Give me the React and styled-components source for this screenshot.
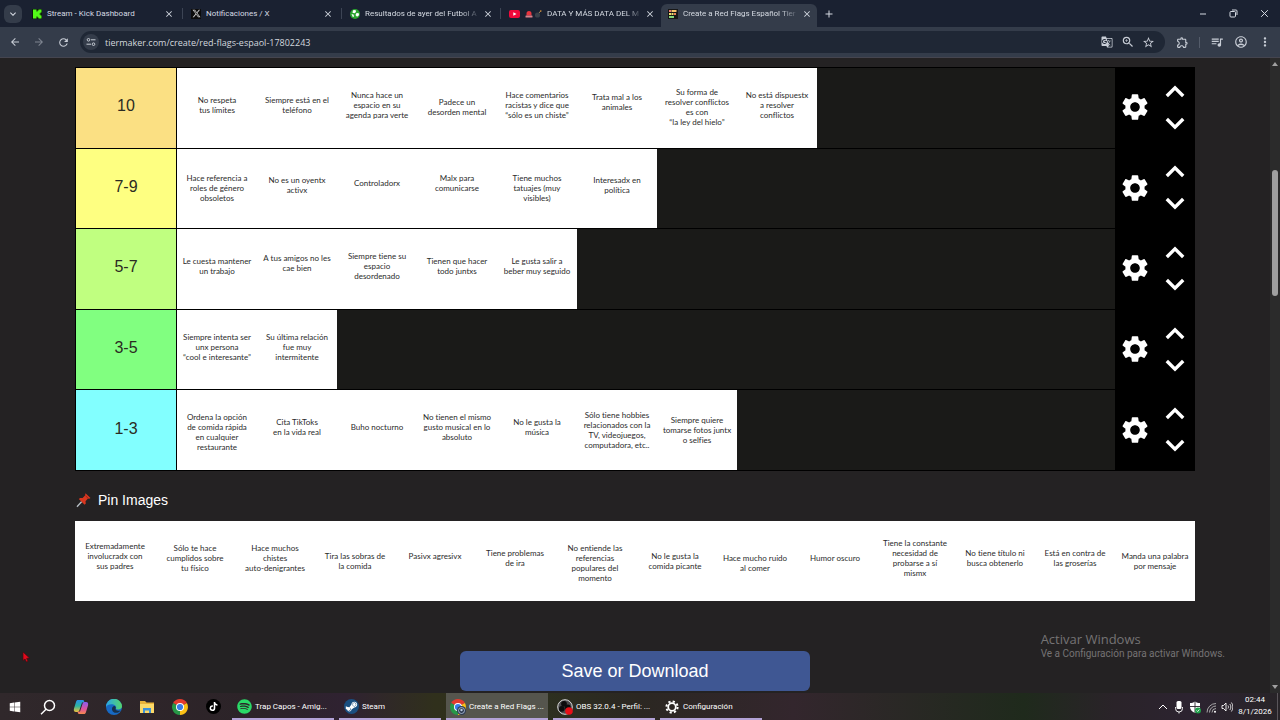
import React, { useState } from 'react';
import styled, { createGlobalStyle } from 'styled-components';
import {
    MdAdd, MdArrowBack, MdArrowForward, MdClose, MdGTranslate, MdKeyboardArrowDown,
    MdMoreVert, MdOutlineAccountCircle, MdOutlineExtension, MdQueueMusic, MdRefresh,
    MdSettings, MdStarBorder, MdZoomIn
} from 'react-icons/md';
import { FaXTwitter, FaTiktok, FaSpotify, FaSteamSymbol, FaWindows } from 'react-icons/fa6';

const tiers = [
    { name: '10', color: '#fbe083', cards: [
        ['No respeta\ntus límites', 'mid'],
        ['Siempre está en el\nteléfono', 'mid'],
        ['Nunca hace un\nespacio en su\nagenda para verte', 'mid'],
        ['Padece un\ndesorden mental', 'base'],
        ['Hace comentarios\nracistas y dice que\n“sólo es un chiste”', 'mid'],
        ['Trata mal a los\nanimales', 'high'],
        ['Su forma de\nresolver conflictos\nes con\n“la ley del hielo”', 'base'],
        ['No está dispuestx\na resolver\nconflictos', 'mid'],
    ]},
    { name: '7-9', color: '#feff81', cards: [
        ['Hace referencia a\nroles de género\nobsoletos', 'base'],
        ['No es un oyentx\nactivx', 'mid'],
        ['Controladorx', 'high'],
        ['Malx para\ncomunicarse', 'high'],
        ['Tiene muchos\ntatuajes (muy\nvisibles)', 'base'],
        ['Interesadx en\npolítica', 'mid'],
    ]},
    { name: '5-7', color: '#c0ff80', cards: [
        ['Le cuesta mantener\nun trabajo', 'mid'],
        ['A tus amigos no les\ncae bien', 'high'],
        ['Siempre tiene su\nespacio\ndesordenado', 'mid'],
        ['Tienen que hacer\ntodo juntxs', 'mid'],
        ['Le gusta salir a\nbeber muy seguido', 'mid'],
    ]},
    { name: '3-5', color: '#81ff80', cards: [
        ['Siempre intenta ser\nunx persona\n“cool e interesante”', 'mid'],
        ['Su última relación\nfue muy\nintermitente', 'mid'],
    ]},
    { name: '1-3', color: '#82ffff', cards: [
        ['Ordena la opción\nde comida rápida\nen cualquier\nrestaurante', 'low'],
        ['Cita TikToks\nen la vida real', 'mid'],
        ['Buho nocturno', 'mid'],
        ['No tienen el mismo\ngusto musical en lo\nabsoluto', 'mid'],
        ['No le gusta la\nmúsica', 'mid'],
        ['Sólo tiene hobbies\nrelacionados con la\nTV, videojuegos,\ncomputadora, etc..', 'base'],
        ['Siempre quiere\ntomarse fotos juntx\no selfies', 'base'],
    ]},
];

const pinned = [
    ['Extremadamente\ninvolucradx con\nsus padres', 'high'],
    ['Sólo te hace\ncumplidos sobre\ntu físico', 'mid'],
    ['Hace muchos\nchistes\nauto-denigrantes', 'mid'],
    ['Tira las sobras de\nla comida', 'base'],
    ['Pasivx agresivx', 'high'],
    ['Tiene problemas\nde ira', 'mid'],
    ['No entiende las\nreferencias\npopulares del\nmomento', 'low'],
    ['No le gusta la\ncomida picante', 'base'],
    ['Hace mucho ruido\nal comer', 'low'],
    ['Humor oscuro', 'mid'],
    ['Tiene la constante\nnecesidad de\nprobarse a sí\nmismx', 'mid'],
    ['No tiene título ni\nbusca obtenerlo', 'mid'],
    ['Está en contra de\nlas groserías', 'mid'],
    ['Manda una palabra\npor mensaje', 'base'],
];

const tabs = [
    { title: 'Stream - Kick Dashboard', icon: <KickIcon /> },
    { title: 'Notificaciones / X', icon: <XIcon /> },
    { title: 'Resultados de ayer del Futbol A', icon: <BallIcon />, fade: true },
    { title: 'DATA Y MÁS DATA DEL M', icon: <YoutubeIcon />, emojis: true, fade: true },
    { title: 'Create a Red Flags Español Tier', icon: <TierIcon />, active: true, fade: true },
];

const windows = [
    { title: 'Trap Capos - Amig...', icon: <FaSpotify size={15} color='#2bd967' /> },
    { title: 'Steam', icon: <SteamIcon /> },
    { title: 'Create a Red Flags ...', icon: <ChromeIcon badge />, active: true },
    { title: 'OBS 32.0.4 - Perfil: ...', icon: <ObsIcon /> },
    { title: 'Configuración', icon: <CogIcon /> },
];

function App() {
    const [url, setUrl] = useState('tiermaker.com/create/red-flags-espaol-17802243');

    return (
        <Desktop>
            <GlobalStyle />
            <TabStrip>
                <TabSearch aria-label='Buscar pestañas'><MdKeyboardArrowDown size={12} /></TabSearch>
                <Tabs>
                    {tabs.map((tab) => (
                        <Tab key={tab.title} $active={tab.active}>
                            {tab.icon}
                            {tab.emojis && <EmojiPair />}
                            <TabTitle $fade={tab.fade}>{tab.title}</TabTitle>
                            <IconButton $size={12} aria-label='Cerrar pestaña'><MdClose size={10} /></IconButton>
                        </Tab>
                    ))}
                </Tabs>
                <IconButton $size={18} aria-label='Nueva pestaña'><MdAdd size={12} /></IconButton>
                <WindowButtons>
                    <IconButton $size={31} aria-label='Minimizar'>
                        <svg width='8' height='8' viewBox='0 0 8 8'><path d='M1 4h6' stroke='currentColor' /></svg>
                    </IconButton>
                    <IconButton $size={31} aria-label='Restaurar'>
                        <svg width='9' height='9' viewBox='0 0 9 9' fill='none' stroke='currentColor'>
                            <rect x='1' y='2.5' width='5.5' height='5.5' rx='1' />
                            <path d='M3 1h4a1 1 0 0 1 1 1v4' />
                        </svg>
                    </IconButton>
                    <IconButton $size={31} aria-label='Cerrar'>
                        <svg width='9' height='9' viewBox='0 0 9 9'><path d='M1.200 1.200l6.600 6.600M7.800 1.200l-6.600 6.600' stroke='currentColor' /></svg>
                    </IconButton>
                </WindowButtons>
            </TabStrip>

            <Toolbar>
                <IconButton $size={24} aria-label='Atrás'><MdArrowBack size={12} /></IconButton>
                <IconButton $size={24} $dim aria-label='Adelante'><MdArrowForward size={12} /></IconButton>
                <IconButton $size={24} aria-label='Recargar'><MdRefresh size={13} /></IconButton>
                <AddressBar>
                    <SiteInfo aria-label='Información del sitio'>
                        <svg width='10' height='10' viewBox='0 0 10 10' fill='none' stroke='currentColor'>
                            <circle cx='2.500' cy='2.800' r='1.300' /><path d='M5 2.800h4.500M.5 7.200h4.500' />
                            <circle cx='7.500' cy='7.200' r='1.300' />
                        </svg>
                    </SiteInfo>
                    <UrlInput aria-label='Dirección' value={url} onChange={(e) => setUrl(e.target.value)} />
                    <IconButton $size={21} aria-label='Traducir'><MdGTranslate size={12} /></IconButton>
                    <IconButton $size={21} aria-label='Zoom'><MdZoomIn size={14} /></IconButton>
                    <IconButton $size={21} aria-label='Favoritos'><MdStarBorder size={13} /></IconButton>
                </AddressBar>
                <IconButton $size={24} aria-label='Extensiones'><MdOutlineExtension size={13} /></IconButton>
                <Divider />
                <IconButton $size={24} aria-label='Multimedia'><MdQueueMusic size={14} /></IconButton>
                <IconButton $size={24} aria-label='Perfil'><MdOutlineAccountCircle size={14} /></IconButton>
                <IconButton $size={24} aria-label='Menú'><MdMoreVert size={14} /></IconButton>
            </Toolbar>

            <Viewport>
                <Main>
                    <Board>
                        {tiers.map((tier) => (
                            <Tier key={tier.name}>
                                <TierName $color={tier.color}>{tier.name}</TierName>
                                <CardList>
                                    {tier.cards.map(([text, place]) => <Card key={text} $place={place}>{text}</Card>)}
                                </CardList>
                                <TierControls>
                                    <ControlButton aria-label='Settings'><MdSettings size={32} /></ControlButton>
                                    <MoveButtons>
                                        <ControlButton aria-label='Move up'><Chevron up /></ControlButton>
                                        <ControlButton aria-label='Move down'><Chevron /></ControlButton>
                                    </MoveButtons>
                                </TierControls>
                            </Tier>
                        ))}
                    </Board>
                    <PinHeading><PinIcon />Pin Images</PinHeading>
                    <PinTray>
                        {pinned.map(([text, place]) => <Card key={text} $place={place}>{text}</Card>)}
                    </PinTray>
                    <SaveButton>Save or Download</SaveButton>
                </Main>
                <Scrollbar>
                    <ScrollArrow />
                    <ScrollThumb />
                    <ScrollArrow $down />
                </Scrollbar>
                <Watermark>
                    <h2>Activar Windows</h2>
                    <p>Ve a Configuración para activar Windows.</p>
                </Watermark>
                <Pointer width='8' height='12' viewBox='0 0 8 12'>
                    <path d='M1 1v8.500l2-1.500 1.500 3 1.500-.8-1.300-2.800L7.500 7z' fill='#e00a1c' stroke='#4a0a10' strokeWidth='.7' />
                </Pointer>
            </Viewport>

            <Taskbar>
                <Launchers>
                    <TaskIcon aria-label='Inicio'><FaWindows size={12} /></TaskIcon>
                    <TaskIcon aria-label='Buscar'>
                        <svg width='16' height='16' viewBox='0 0 16 16' fill='none' stroke='#fff' strokeWidth='1.500'>
                            <circle cx='9.500' cy='6.500' r='5' /><path d='M6 10.200L1 15.200' />
                        </svg>
                    </TaskIcon>
                    <TaskIcon aria-label='Copilot'><CopilotIcon /></TaskIcon>
                    <TaskIcon aria-label='Edge'><EdgeIcon /></TaskIcon>
                    <TaskIcon aria-label='Explorador de archivos'><FolderIcon /></TaskIcon>
                    <TaskIcon aria-label='Chrome'><ChromeIcon /></TaskIcon>
                    <TaskIcon aria-label='TikTok'><Disc><FaTiktok size={9} /></Disc></TaskIcon>
                </Launchers>
                <OpenWindows>
                    {windows.map((win) => (
                        <WindowButton key={win.title} $active={win.active}>
                            <WindowIcon>{win.icon}</WindowIcon>
                            {win.title}
                        </WindowButton>
                    ))}
                </OpenWindows>
                <Tray>
                    <TrayIcons />
                    <Clock><span>02:44</span><span>8/1/2026</span></Clock>
                </Tray>
            </Taskbar>
        </Desktop>
    )
}

export default App

function Chevron({ up }) {
    return (
        <svg width='20' height='14' viewBox='0 0 20 14' fill='none' stroke='#fff' strokeWidth='3.400'>
            <path d={up ? 'M1.800 11l8.200-8.200 8.200 8.200' : 'M1.800 3l8.200 8.200 8.200-8.200'} />
        </svg>
    )
}

function KickIcon() {
    return (
        <svg width='10' height='10' viewBox='0 0 10 10'>
            <rect width='10' height='10' fill='#0b1a0b' />
            <path d='M1 .5h3.500v2h1v-1h1v-1h3v3h-1v1h-1v1h1v1h1v3h-3v-1h-1v-1h-1v2H1z' fill='#53fc18' />
        </svg>
    )
}

function XIcon() {
    return <IconTile><FaXTwitter size={9} /></IconTile>
}

function BallIcon() {
    return (
        <svg width='10' height='10' viewBox='0 0 10 10'>
            <circle cx='5' cy='5' r='5' fill='#2aa52f' />
            <path d='M3 1.200l2.500-.2.500 2L4.500 4.200l-2 -.5zM6.500 4l2.300.2.200 2-2 1.500L5.500 6zM1.500 5l2 .5.600 2L2.800 8z' fill='#fff' />
        </svg>
    )
}

function YoutubeIcon() {
    return (
        <svg width='11' height='10' viewBox='0 0 11 10'>
            <rect y='1' width='11' height='8' rx='2' fill='#f2083a' />
            <path d='M4.300 3.200v3.600L7.500 5z' fill='#fff' />
        </svg>
    )
}

function EmojiPair() {
    return (
        <svg width='17' height='10' viewBox='0 0 17 10'>
            <path d='M1.500 6.500V4.500a2.500 2.500 0 0 1 5 0v2z' fill='#e8343e' />
            <rect x='.5' y='6.500' width='7' height='2' rx='.5' fill='#d9808a' />
            <circle cx='12.500' cy='6' r='2.600' fill='#39414a' />
            <path d='M14 4l1.500-1.800' stroke='#a08a5a' />
            <circle cx='15.800' cy='2' r='.8' fill='#e59a3c' />
        </svg>
    )
}

function TierIcon() {
    return (
        <svg width='10' height='10' viewBox='0 0 10 10'>
            <rect width='10' height='10' fill='#171717' />
            <path d='M1 1h2v2H1z' fill='#f07a72' />
            <path d='M3.500 1h5v2h-5z' fill='#f5c46c' />
            <path d='M1 4h2v2H1zM3.500 4h2v2h-2z' fill='#f3e06d' />
            <path d='M6 4h2v2H6z' fill='#e88258' />
            <path d='M1 7h5v2H1z' fill='#86d67a' />
        </svg>
    )
}

function PinIcon() {
    return (
        <svg width='16' height='16' viewBox='0 0 16 16'>
            <path d='M5.800 9.500L1 14.800' stroke='#b8c0c6' strokeWidth='1.300' />
            <path d='M9.500 1.200l5 4.800-1.300.8-1.200-.2-2.500 2.600.3 2.400-1.200 1.200L2.800 7l1.300-1.100 2.500.2L9 3.500z' fill='#d8371f' />
            <path d='M9.500 3.800l2.500 2.400' stroke='#9c2418' />
        </svg>
    )
}

function CopilotIcon() {
    return (
        <svg width='16' height='16' viewBox='0 0 16 16'>
            <defs>
                <linearGradient id='copA' x1='0' y1='0' x2='0' y2='1'><stop stopColor='#2a8fe8' /><stop offset='.5' stopColor='#2cb5a0' /><stop offset='1' stopColor='#f2c13a' /></linearGradient>
                <linearGradient id='copB' x1='0' y1='0' x2='0' y2='1'><stop stopColor='#8a5cf0' /><stop offset='.6' stopColor='#e0559a' /><stop offset='1' stopColor='#f58a4c' /></linearGradient>
            </defs>
            <path d='M5 1h5c1 0 1 1 1.500 2.500H9L6.500 11c-.4 1.500-1 2-2.500 2H3c-2 0-2.500-1.500-2-3.500L3 3c.4-1.500 1-2 2-2z' fill='url(#copA)' />
            <path d='M11 15H6c-1 0-1-1-1.500-2.500H7L9.500 5c.4-1.500 1-2 2.500-2h1c2 0 2.500 1.500 2 3.500L13 13c-.4 1.500-1 2-2 2z' fill='url(#copB)' />
        </svg>
    )
}

function EdgeIcon() {
    return (
        <svg width='16' height='16' viewBox='0 0 16 16'>
            <defs>
                <linearGradient id='edge' x1='0' y1='0' x2='1' y2='0'><stop stopColor='#2aa5e8' /><stop offset='1' stopColor='#56d66a' /></linearGradient>
            </defs>
            <circle cx='8' cy='8' r='8' fill='#1769c4' />
            <path d='M0 8a8 8 0 0 1 16-.5c0 3-4.500 3.800-6.200 2.300C11 8.500 9.500 5.500 6.500 5.300 3 5 .8 6.500 0 8z' fill='url(#edge)' />
            <path d='M9.600 9.500c-.6 1.500 1.400 3 4.900 2-2 3.500-8 3-8.500-1C5.800 8.500 7 7 8.600 7c1 .5 1.400 1.600 1 2.500z' fill='#17304a' />
        </svg>
    )
}

function FolderIcon() {
    return (
        <svg width='16' height='14' viewBox='0 0 16 14'>
            <path d='M1 1h5l1.500 1.500H15V13H1z' fill='#e8b33a' />
            <path d='M1 4h14v9H1z' fill='#fbd968' />
            <path d='M4 8h8v5h-2v-2.500H6V13H4z' fill='#3d92d8' />
        </svg>
    )
}

function ChromeIcon({ badge }) {
    return (
        <svg width='16' height='16' viewBox='0 0 16 16'>
            <path d='M8 8L1.100 4a8 8 0 0 1 13.800 0z' fill='#e33b2e' />
            <path d='M8 8L14.900 4A8 8 0 0 1 8 16z' fill='#fbc116' />
            <path d='M8 8v8A8 8 0 0 1 1.100 4z' fill='#279847' />
            <circle cx='8' cy='8' r='4' fill='#fff' />
            <circle cx='8' cy='8' r='3.100' fill='#3b7de8' />
            {badge && <g><circle cx='11.500' cy='11.500' r='4.500' fill='#2c3a52' /><circle cx='11.500' cy='11.500' r='3' fill='none' stroke='#b9c8e0' strokeWidth='.8' /><circle cx='11.500' cy='11' r='1.200' fill='#b9c8e0' /></g>}
        </svg>
    )
}

function SteamIcon() {
    return <Disc $color='#1a4f80'><FaSteamSymbol size={13} /></Disc>
}

function ObsIcon() {
    return (
        <svg width='16' height='16' viewBox='0 0 16 16'>
            <circle cx='8' cy='8' r='7.300' fill='#4a4a4c' stroke='#d8d8d8' strokeWidth='1' />
            <circle cx='7' cy='4.800' r='2.900' fill='#0c0c0d' />
            <circle cx='4.800' cy='9.800' r='2.900' fill='#0c0c0d' />
            <circle cx='10.800' cy='8.300' r='2.900' fill='#0c0c0d' />
            <circle cx='12' cy='12' r='3.800' fill='#e80f18' />
        </svg>
    )
}

function CogIcon() {
    return (
        <svg width='14' height='14' viewBox='0 0 14 14' fill='none' stroke='#fff'>
            <circle cx='7' cy='7' r='3.800' strokeWidth='1.800' />
            <circle cx='7' cy='7' r='5.600' strokeWidth='2' strokeDasharray='2.200 2.198' />
        </svg>
    )
}

function TrayIcons() {
    return (
        <svg width='76' height='14' viewBox='0 0 76 14' fill='none' stroke='#fff'>
            <path d='M2 9l4-4 4 4' />
            <rect x='19.500' y='1' width='5' height='8' rx='1.500' fill='#fff' stroke='none' />
            <path d='M18.500 7v1.500a3.500 3.500 0 0 0 7 0V7M22 12v1.500' strokeWidth='.9' />
            <path d='M38 1.500c1.800 1.200 3 1.500 5 1.500v4c0 3-2.500 5-5 6-2.500-1-5-3-5-6V3c2 0 3.200-.3 5-1.500z' fill='#fff' stroke='none' />
            <path d='M38 1.500V13M33 6.500h10' stroke='#2b242c' strokeWidth='.9' />
            <circle cx='41' cy='10.500' r='3' fill='#1fa04a' stroke='none' />
            <path d='M39.600 10.500l1 1 1.800-2' strokeWidth='.8' />
            <path d='M50 12.500a9 9 0 0 1 9-9M52.500 12.500A6.500 6.500 0 0 1 59 6M55 12.500a4 4 0 0 1 4-4' stroke='#b5b5b5' strokeWidth='.9' />
            <circle cx='58' cy='11.800' r='1' fill='#fff' stroke='none' />
            <path d='M65 5.500h1.500L69 3v8l-2.500-2.500H65z' strokeWidth='.9' />
            <path d='M71 5.500c.6.800.6 2.200 0 3M72.800 4c1.400 1.600 1.400 4.400 0 6M74.400 2.500c2 2.600 2 6.400 0 9' strokeWidth='.8' />
        </svg>
    )
}

const GlobalStyle = createGlobalStyle`
    *{
        box-sizing:border-box;
    }

    body{
        margin:0;
        background:#242223;
        font-family:'Liberation Sans', Arial, sans-serif;
    }

    button{
        padding:0;
        border:none;
        background:transparent;
        color:inherit;
        font:inherit;
        cursor:pointer;
    }

    svg{
        display:block;
        flex-shrink:0;
    }
`

const Desktop = styled.div`
    height:100vh;
    display:flex;
    flex-direction:column;
    overflow:hidden;
`

const IconButton = styled.button`
    width:${props => props.$size}px;
    height:20px;
    flex-shrink:0;
    display:flex;
    align-items:center;
    justify-content:center;
    opacity:${props => props.$dim ? 0.5 : 1};
`

const TabStrip = styled.div`
    height:27px;
    flex-shrink:0;
    display:flex;
    align-items:center;
    padding-left:4px;
    background:#1a2131;
    color:#d5dae2;
    font-family:Roboto, 'Open Sans', sans-serif;
`

const TabSearch = styled.button`
    width:18px;
    height:18px;
    display:flex;
    align-items:center;
    justify-content:center;
    border-radius:6px;
    background:#343c4a;
`

const Tabs = styled.div`
    display:flex;
    align-self:stretch;
    gap:3px;
    padding:4px 3px 0;
`

const Tab = styled.div`
    width:156px;
    display:flex;
    align-items:center;
    gap:5px;
    position:relative;
    padding:0 6px 4px 7px;
    border-radius:6px 6px 0 0;
    background:${props => props.$active ? '#343c4a' : 'transparent'};

    &:nth-child(-n+3)::after{
        content:'';
        position:absolute;
        right:-2px;
        top:4px;
        width:1px;
        height:11px;
        background:#3c4454;
    }
`

const TabTitle = styled.span`
    flex:1;
    white-space:nowrap;
    font-size:8px;
    line-height:12px;
    mask-image:${props => props.$fade ? 'linear-gradient(to right, #000 86%, rgba(0,0,0,0.2))' : 'none'};
`

const IconTile = styled.span`
    width:10px;
    height:10px;
    display:flex;
    align-items:center;
    justify-content:center;
    background:#0c0c0c;
    color:#c9c9c9;
`

const WindowButtons = styled.div`
    display:flex;
    margin-left:auto;
`

const Toolbar = styled.div`
    height:31px;
    flex-shrink:0;
    display:flex;
    align-items:center;
    padding:0 3px;
    background:#343c4a;
    border-bottom:1px solid #45454f;
    color:#c8cdd6;
`

const AddressBar = styled.div`
    flex:1;
    height:22px;
    display:flex;
    align-items:center;
    margin:0 5px;
    padding:0 6px 0 3px;
    border-radius:11px;
    background:#1f2735;
`

const SiteInfo = styled.button`
    width:16px;
    height:16px;
    display:flex;
    align-items:center;
    justify-content:center;
    border-radius:50%;
    background:#343c4a;
`

const UrlInput = styled.input`
    flex:1;
    min-width:0;
    padding:0 6px;
    border:none;
    outline:none;
    background:transparent;
    color:#d3d7de;
    font-family:'Open Sans', 'Noto Sans', sans-serif;
    font-size:9px;
`

const Divider = styled.span`
    width:1px;
    height:11px;
    margin:0 5px;
    background:#545c6a;
`

const Viewport = styled.div`
    flex:1;
    min-height:0;
    display:flex;
    position:relative;
    background:#242223;
`

const Main = styled.main`
    flex:1;
    display:flex;
    flex-direction:column;
    padding:9px 75px 0;
    overflow:hidden;
`

const Board = styled.div`
    min-height:404px;
    flex-shrink:0;
    display:grid;
    grid-auto-rows:1fr;
    border:solid #000;
    border-width:1px 0 0 1px;
`

const Tier = styled.div`
    display:flex;
    background:#1a1a18;
    border-bottom:1px solid #000;
`

const TierName = styled.div`
    width:101px;
    flex-shrink:0;
    display:flex;
    align-items:center;
    justify-content:center;
    padding-bottom:3px;
    border-right:1px solid #000;
    background:${props => props.$color};
    color:#2b2b22;
    font-size:16px;
`

const CardList = styled.div`
    flex:1;
    display:flex;
`

const cardPadding = { high: '0 0 11px', mid: '0 0 6px', base: '0 0 1px', low: '4px 0 0' };

const Card = styled.div`
    width:80px;
    display:flex;
    align-items:center;
    justify-content:center;
    padding:${props => cardPadding[props.$place]};
    background:#fff;
    color:#2b2b2b;
    font-family:Lato, 'Open Sans', sans-serif;
    font-size:8px;
    font-variant-ligatures:none;
    line-height:10px;
    text-align:center;
    white-space:pre;
`

const TierControls = styled.div`
    width:80px;
    flex-shrink:0;
    display:grid;
    grid-template-columns:1fr 1fr;
    padding-bottom:1px;
    background:#000;
    color:#fff;
`

const ControlButton = styled.button`
    display:flex;
    align-items:center;
    justify-content:center;
`

const MoveButtons = styled.div`
    display:grid;
    grid-auto-rows:31px;
    align-content:center;
`

const PinHeading = styled.h1`
    display:flex;
    align-items:center;
    gap:6px;
    flex-shrink:0;
    margin:20px 0 12px;
    padding-left:1px;
    color:#fff;
    font-size:14px;
    line-height:18px;
    font-weight:400;
`

const PinTray = styled.div`
    min-height:80px;
    flex-shrink:0;
    display:flex;
    background:#fff;
`

const SaveButton = styled.button`
    width:350px;
    height:40px;
    flex-shrink:0;
    align-self:center;
    margin-top:50px;
    border-radius:6px;
    background:#3f5793;
    color:#fff;
    font-size:18px;
`

const Scrollbar = styled.div`
    width:10px;
    display:flex;
    flex-direction:column;
    align-items:center;
    padding:4px 0;
    background:#2b2b2b;
`

const ScrollArrow = styled.span`
    border:solid transparent;
    border-width:${props => props.$down ? '4px 3px 0' : '0 3px 4px'};
    border-top-color:${props => props.$down ? '#a0a0a0' : 'transparent'};
    border-bottom-color:${props => props.$down ? 'transparent' : '#a0a0a0'};
`

const ScrollThumb = styled.span`
    width:6px;
    height:126px;
    margin:104px 0 auto;
    border-radius:3px;
    background:#9f9f9f;
`

const Watermark = styled.div`
    position:absolute;
    right:55px;
    bottom:32px;
    color:#757374;

    h2{
        margin:0;
        font-family:'Open Sans', 'Noto Sans', sans-serif;
        font-size:13px;
        line-height:16px;
        font-weight:400;
    }

    p{
        margin:0;
        font-family:Roboto, 'Open Sans', sans-serif;
        font-size:10px;
        line-height:14px;
    }
`

const Pointer = styled.svg`
    position:absolute;
    left:22px;
    bottom:30px;
`

const Taskbar = styled.div`
    height:27px;
    flex-shrink:0;
    display:flex;
    background:linear-gradient(to right, #30282b 0, #2c2328 20%, #2f2231 27%, #30301c 34%, #2d301f 42%, #2b2722 50%, #33262d 62%, #1f2a1c 80%, #2a2329 87%, #2c2330 93%, #282428);
    color:#fff;
    font-family:Roboto, 'Open Sans', sans-serif;
    font-size:8px;
`

const Launchers = styled.div`
    display:flex;
    gap:3px;
    padding-right:4px;
`

const TaskIcon = styled.button`
    width:30px;
    display:flex;
    align-items:center;
    justify-content:center;
`

const Disc = styled.span`
    width:15px;
    height:15px;
    display:flex;
    align-items:center;
    justify-content:center;
    border-radius:50%;
    background:${props => props.$color || '#000'};
`

const OpenWindows = styled.div`
    display:flex;
    gap:5px;
`

const WindowButton = styled.button`
    width:102px;
    display:flex;
    align-items:center;
    gap:3px;
    padding:2px 4px 0;
    border-bottom:2px solid #b3a2d6;
    background:${props => props.$active ? '#55554d' : 'transparent'};
    white-space:nowrap;
`

const WindowIcon = styled.span`
    width:16px;
    display:flex;
    justify-content:center;
`

const Tray = styled.div`
    display:flex;
    align-items:center;
    gap:5px;
    margin-left:auto;
    padding-right:2px;

    &::after{
        content:'';
        width:1px;
        height:100%;
        background:#5a555a;
    }
`

const Clock = styled.div`
    display:flex;
    flex-direction:column;
    width:34px;
    padding-bottom:2px;
    line-height:12px;
    text-align:center;
`
